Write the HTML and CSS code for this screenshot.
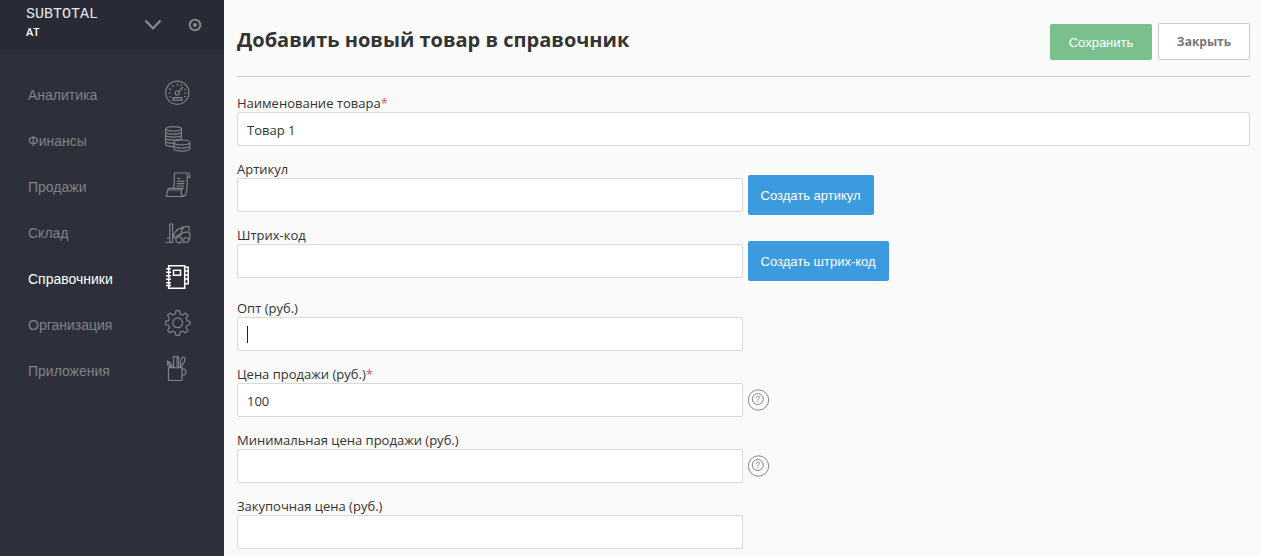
FILE: index.html
```html
<!DOCTYPE html>
<html lang="ru">
<head>
<meta charset="utf-8">
<title>Добавить новый товар в справочник</title>
<link rel="stylesheet" href="styles.css">
</head>
<body>
<div class="app">
  <aside class="sidebar">
    <header class="brand">
      <div class="brand-text">
        <a class="brand-name" href="#">SUBTOTAL</a>
        <span class="brand-account">AT</span>
      </div>
      <button class="icon-button" type="button" aria-label="Выбрать аккаунт">
        <svg width="18" height="12" viewBox="0 0 18 12"><path d="M1.500 1.500 9 9.500l7.500-8" fill="none" stroke="currentColor" stroke-width="2.200"/></svg>
      </button>
      <button class="icon-button" type="button" aria-label="Настройки">
        <svg width="14" height="14" viewBox="0 0 14 14"><circle cx="7" cy="7" r="5.300" fill="none" stroke="currentColor" stroke-width="1.800"/><circle cx="7" cy="7" r="2" fill="currentColor"/></svg>
      </button>
    </header>
    <nav class="menu">
      <a class="menu-item" href="#"><span>Аналитика</span>
        <svg class="menu-icon" viewBox="0 0 26 26"><circle cx="12.300" cy="12.700" r="11.600"/><circle cx="12.200" cy="13" r="2"/><path d="M13.700 11.500 18 7M8 17.700h9v2.500H8zM3.300 13h2.400M19.300 13h2.400M4.200 8.600l2 1M7.200 5.200l1.300 1.700M12.500 3.500v2.300M20.800 9l-1.700.8M4.300 17l1.700-.8M20.700 17l-1.700-.8M16.300 4.300l-.8 1.600"/></svg></a>
      <a class="menu-item" href="#"><span>Финансы</span>
        <svg class="menu-icon" viewBox="0 0 26 26"><ellipse cx="8.500" cy="2.800" rx="7.900" ry="2.200"/><path d="M.6 2.800v15.400c0 1.300 3.500 2.300 7.800 2.300M16.400 2.800v11M.6 5.800c0 3 15.800 3 15.800 0M.6 8.800c0 3 15.800 3 15.800 0M.6 11.800c0 3 15.800 3 15.800 0M.6 15c0 1.700 4.400 2.500 8.400 2.200"/><ellipse cx="16.800" cy="16.400" rx="8" ry="2.400"/><path d="M8.800 16.400v6.200c0 3.300 16 3.300 16 0v-6.200M8.800 19.500c0 3.300 16 3.300 16 0"/></svg></a>
      <a class="menu-item" href="#"><span>Продажи</span>
        <svg class="menu-icon" viewBox="0 0 26 26"><path d="M8.500 16C9.500 11 9.500 6 9.500 1h13.700c1 0 1.500.8 1.500 2v2.300h-2.500V2M22.200 5.300c0 6 .5 11-1.200 16.500-.8 2-2 2.700-4 2.700H.7M1.500 24.500 2.500 18h13.800v3c0 2 .6 3.500 2 3.500M2.500 18l1.700-1.700h13.600L16.300 18M12 6.500h3.500M12 9.300h7.500M11.700 11.700h7.500M11.500 14h7.500"/></svg></a>
      <a class="menu-item" href="#"><span>Склад</span>
        <svg class="menu-icon" viewBox="0 0 26 26"><path d="M.5 24.500h8M2 20.200h3M4.800 24.500V6h2.800v18.500M8 18.500C10 12 15 8.500 23.700 8.300c.7 1.500.5 3.700.5 5M10 20.500c1-2.500 3-3.800 6-4.800M16 15.700c.5-3 1.500-5.500 3-7.200M13.500 18.500c3-3 5-5 10.700-4.200.8 1.500.8 5.700.4 8M9 20.300v-4.500M17.500 24.500h1.500"/><circle cx="13.800" cy="21.800" r="3"/><circle cx="21.200" cy="22" r="2.500"/></svg></a>
      <a class="menu-item is-active" href="#" aria-current="page"><span>Справочники</span>
        <svg class="menu-icon" viewBox="0 0 26 26"><path stroke-width="1.500" d="M3.700 1.700h16v22.600h-16zM8.500 6.200h7v5h-7zM19.700 3.200h3.500v16.500h-3.500M19.700 7h3.500M19.700 11h3.500M19.700 15h3.500"/><path stroke-width="1.400" d="M1 4.700h5M1 8.200h5M1 11.700h5M1 15.200h5M1 18.700h5M1 21.500h5"/></svg></a>
      <a class="menu-item" href="#"><span>Организация</span>
        <svg class="menu-icon" viewBox="0 0 26 26"><circle cx="12.700" cy="12.800" r="4.900"/><path d="M10.900.7h3.600l.5 3.200 2.700 1.100 2.700-1.900 2.500 2.500L21 8.300l1.100 2.600 2.900.5v3.200l-2.900.6-1.100 2.600 1.900 2.700-2.500 2.500-2.700-1.900-2.700 1.100-.5 3.100h-3.600l-.5-3.100-2.600-1.100L5.100 23l-2.500-2.500 1.900-2.700-1.100-2.600-3-.6v-3.200l3-.5 1.100-2.600-1.900-2.700 2.500-2.500L7.800 5l2.600-1.100z"/></svg></a>
      <a class="menu-item" href="#"><span>Приложения</span>
        <svg class="menu-icon" viewBox="0 0 26 26"><path d="M3.500 11.700H17v11.800c0 .5-.5 1-1 1H4.500c-.5 0-1-.5-1-1zM17 13.200h1.500c3.200 0 3.200 6 0 6H17M8.500 11.500V.7h5v10.800M11 2.700h2.500M11 5h2.500M11 7.200h2.500M11 9.500h2.500M6.500 11.500 2.500 9V5c2.500 1 4 3 5 6M3 5.500l3 5.500M15 11.500c1-3 .3-4 .5-6C16 3 17 1 19 1c1.500 1 1 4.500-.5 6.500-1 1-2 1-2 4"/></svg></a>
    </nav>
  </aside>
  <main class="content">
    <form class="product-form">
      <header class="page-head">
        <h1 class="page-title">Добавить новый товар в справочник</h1>
        <div class="page-actions">
          <button class="button button-save" type="submit">Сохранить</button>
          <button class="button button-close" type="button">Закрыть</button>
        </div>
      </header>
      <div class="field">
        <label class="label" for="name">Наименование товара<span class="required">*</span></label>
        <input class="input" id="name" type="text" value="Товар 1">
      </div>
      <div class="field field-split">
        <div class="field-main">
          <label class="label" for="sku">Артикул</label>
          <input class="input" id="sku" type="text">
        </div>
        <button class="button button-create" type="button">Создать артикул</button>
      </div>
      <div class="field field-split">
        <div class="field-main">
          <label class="label" for="barcode">Штрих-код</label>
          <input class="input" id="barcode" type="text">
        </div>
        <button class="button button-create" type="button">Создать штрих-код</button>
      </div>
      <div class="field field-split prices-start">
        <div class="field-main">
          <label class="label" for="wholesale">Опт (руб.)</label>
          <div class="input-wrap"><input class="input" id="wholesale" type="text"><span class="caret"></span></div>
        </div>
      </div>
      <div class="field field-split">
        <div class="field-main">
          <label class="label" for="price">Цена продажи (руб.)<span class="required">*</span></label>
          <input class="input" id="price" type="text" value="100">
        </div>
        <button class="help" type="button" aria-label="Подсказка">
          <svg width="22" height="22" viewBox="0 0 22 22"><circle cx="10.500" cy="11" r="10.200"/><circle cx="9.800" cy="10" r="5.500"/><path d="M8.300 8.800c0-2.300 3.200-2.200 3.200-.3 0 1.300-1.600 1.200-1.600 2.800M9.900 12.200v1"/></svg>
        </button>
      </div>
      <div class="field field-split">
        <div class="field-main">
          <label class="label" for="min-price">Минимальная цена продажи (руб.)</label>
          <input class="input" id="min-price" type="text">
        </div>
        <button class="help" type="button" aria-label="Подсказка">
          <svg width="22" height="22" viewBox="0 0 22 22"><circle cx="10.500" cy="11" r="10.200"/><circle cx="9.800" cy="10" r="5.500"/><path d="M8.300 8.800c0-2.300 3.200-2.200 3.200-.3 0 1.300-1.600 1.200-1.600 2.800M9.900 12.200v1"/></svg>
        </button>
      </div>
      <div class="field field-split">
        <div class="field-main">
          <label class="label" for="cost">Закупочная цена (руб.)</label>
          <input class="input" id="cost" type="text">
        </div>
      </div>
    </form>
  </main>
</div>
</body>
</html>
```
FILE: styles.css
```css
* {
  box-sizing: border-box;
}

body {
  margin: 0;
  background: #fafafa;
  color: #333;
  font-family: "Open Sans", "Noto Sans", sans-serif;
  font-size: 13px;
}

button,
input {
  font: inherit;
  margin: 0;
}

.app {
  display: flex;
  min-height: 100vh;
}

/* Sidebar */
.sidebar {
  flex: 0 0 224px;
  background: #2d303b;
}

.brand {
  display: flex;
  align-items: center;
  height: 50px;
  padding: 0 20px 0 26px;
  background: #282b36;
  border-bottom: 1px solid #252832;
}

.brand-text {
  display: flex;
  flex: 1;
  flex-direction: column;
  padding-bottom: 4px;
}

.brand-name {
  color: #e8e9eb;
  font: 15px/18px "Liberation Mono", monospace;
  text-decoration: none;
}

.brand-account {
  color: #fff;
  font-size: 11px;
  font-weight: 600;
  line-height: 16px;
}

.icon-button {
  display: flex;
  padding: 2px;
  border: 0;
  background: none;
  color: #8a8c92;
}

.icon-button + .icon-button {
  margin-left: 22px;
}

.menu {
  padding: 30px 33px 0 28px;
}

.menu-item {
  display: flex;
  align-items: flex-start;
  justify-content: space-between;
  height: 46px;
  color: #7f8288;
  font: 14px/30px "Liberation Sans", Arial, sans-serif;
  text-decoration: none;
}

.menu-item.is-active {
  color: #fff;
}

.menu-icon {
  width: 26px;
  height: 26px;
  fill: none;
  stroke: currentColor;
  stroke-width: 1.2;
}

/* Form */
.content {
  flex: 1;
  min-width: 0;
  padding: 0 11px 0 13px;
}

.page-head {
  display: flex;
  align-items: center;
  justify-content: space-between;
  height: 77px;
  margin-bottom: 18px;
  padding-top: 7px;
  border-bottom: 1px solid #ccc;
}

.page-title {
  margin: 0;
  padding-bottom: 4px;
  font-size: 20px;
  line-height: 28px;
}

.page-actions {
  display: flex;
  align-items: flex-end;
  gap: 6px;
}

.button {
  border: 0;
  border-radius: 2px;
  color: #fff;
  font-family: "Liberation Sans", Arial, sans-serif;
  font-size: 13px;
}

.button-save {
  width: 102px;
  height: 36px;
  background: #7abf8e;
}

.button-close {
  width: 92px;
  height: 37px;
  border: 1px solid #ccc;
  background: #fff;
  color: #777;
  font-family: "Open Sans", "Noto Sans", sans-serif;
  font-size: 12px;
  font-weight: bold;
}

.button-create {
  height: 40px;
  padding: 0 13px;
  background: #3c9adf;
}

.field {
  margin-bottom: 15px;
}

.field:last-child {
  margin-bottom: 0;
}

.field-split {
  display: flex;
  align-items: flex-end;
  gap: 5px;
}

.field-split .button-create {
  margin-bottom: -3px;
}

.field-main {
  flex: 0 0 calc(50% - 1px);
}

.prices-start {
  margin-top: 22px;
}

.label {
  display: block;
  padding-bottom: 1px;
  font-size: 13px;
  line-height: 16px;
}

.required {
  color: #f14668;
}

.input {
  display: block;
  width: 100%;
  height: 34px;
  padding: 1px 9px 0;
  border: 1px solid #d9d9d9;
  border-radius: 2px;
  background: #fff;
  color: #333;
  font-size: 13px;
}

.input-wrap {
  position: relative;
}

.caret {
  position: absolute;
  top: 9px;
  left: 10px;
  width: 1px;
  height: 17px;
  background: #222;
}

.help {
  display: flex;
  margin-bottom: 6px;
  padding: 0;
  border: 0;
  background: none;
}

.help svg {
  fill: none;
  stroke: #888;
}
```
